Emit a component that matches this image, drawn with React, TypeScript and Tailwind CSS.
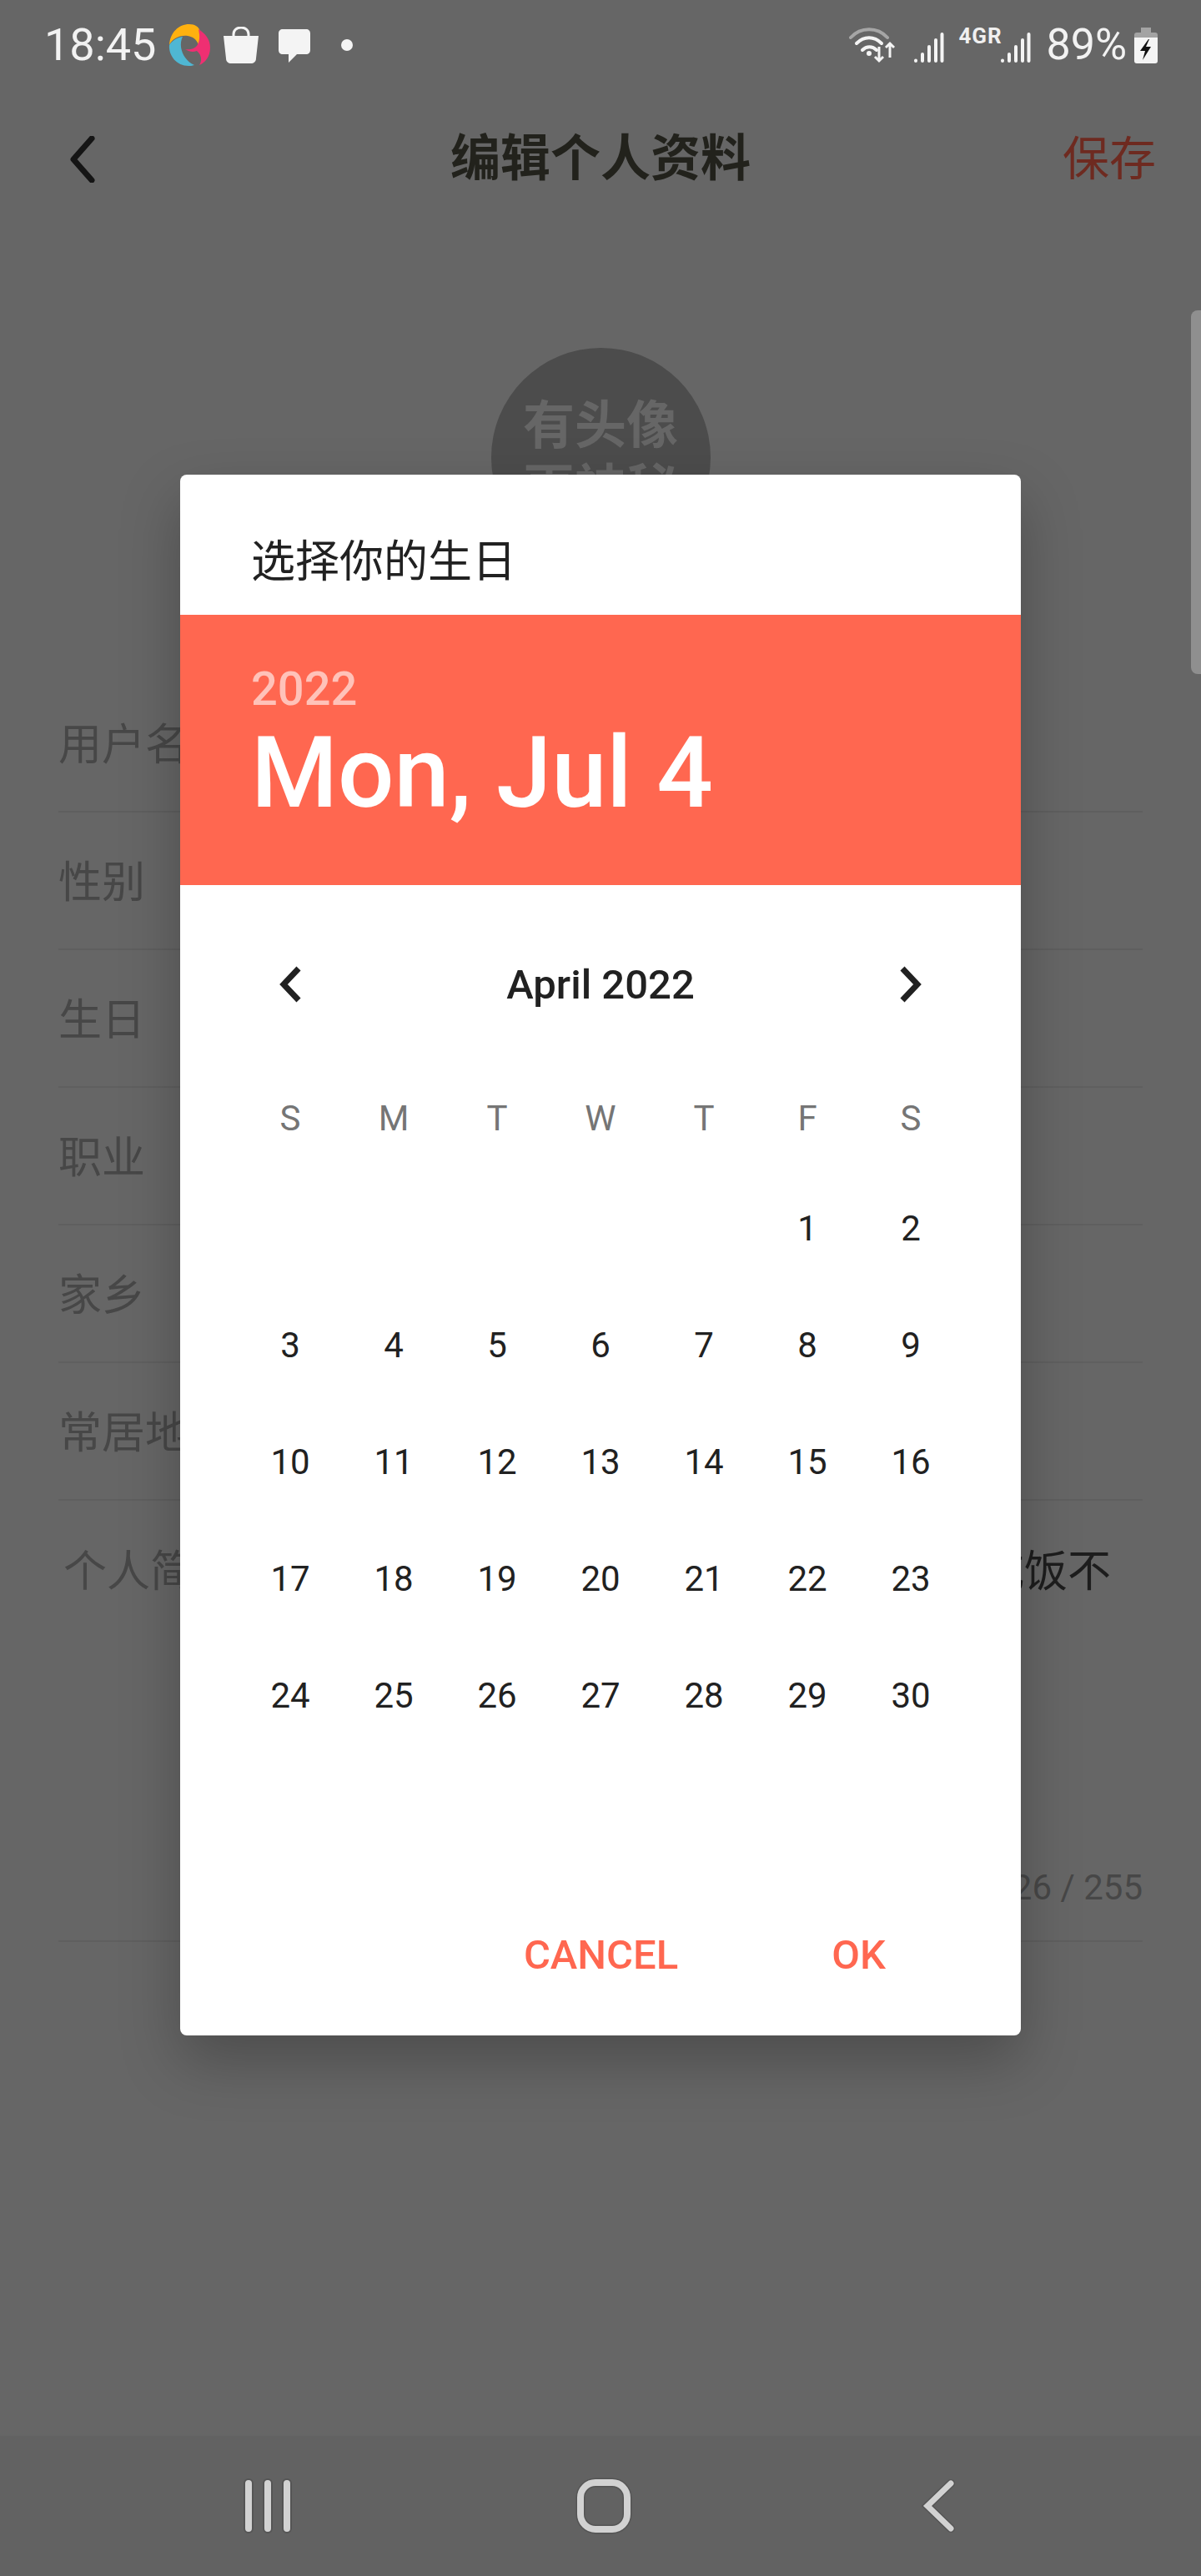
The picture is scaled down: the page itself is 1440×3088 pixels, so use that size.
import React from 'react';

const ROBOTO = 'font-["Roboto","Noto_Sans_CJK_SC",sans-serif]';

const weekdays = ['S', 'M', 'T', 'W', 'T', 'F', 'S'];
// April 2022 starts on a Friday
const days: (number | null)[] = [null, null, null, null, null, ...Array.from({ length: 30 }, (_, i) => i + 1)];
const rows = ['用户名', '性别', '生日', '职业', '家乡', '常居地'];

const Signal = () => (
  <svg width="37" height="36" viewBox="0 0 37 36" className="block">
    <g stroke="#f4f4f4" strokeWidth="4" strokeLinecap="round">
      <path d="M3 33.5v.5" />
      <path d="M11 26v8" />
      <path d="M19 17v17" />
      <path d="M27 9v25" />
      <path d="M34.500 2v32" />
    </g>
  </svg>
);

const StatusBar = () => (
  <div className="flex h-[108px] items-center justify-between pl-[53px] pr-[52px] text-[#f2f2f2]">
    <div className="flex items-center">
      <span className="text-[54px] leading-none">18:45</span>
      <svg width="50" height="50" viewBox="0 0 50 50" className="ml-[15px]">
        <path d="M1 25C2 10 12 0 25 0c7 0 11 3 13 8 2 5 0 14-2 17-2-7-7-10-13-11-10-1-18 3-22 11z" fill="#ffb10f" />
        <path d="M36 6c8 5 14 12 14 22 0 11-6 18-13 21 4-6 2-13-3-17-5 2-9 1-14-2 7 1 14-1 16-8 2-5 1-11 0-16z" fill="#ef2f72" />
        <path d="M1 25c3-5 9-9 16-10-4 8-2 18 3 25 3 4 6 7 11 9-3 1-5 1-7 1C10 50 0 38 1 25z" fill="#4fb7d3" />
      </svg>
      <svg width="42" height="44" viewBox="0 0 42 44" className="ml-[16px]">
        <path d="M0 11h42l-3 27c0 4-3 6-6 6H9c-3 0-6-2-6-6z" fill="#f4f4f4" />
        <path d="M12 12V9c0-5 4-8 9-8s9 3 9 8v3" fill="none" stroke="#f4f4f4" strokeWidth="3" />
      </svg>
      <svg width="40" height="41" viewBox="0 0 40 41" className="ml-[23px]">
        <path d="M6 1h28c3 0 5 2 5 5v20c0 3-2 5-5 5H23L13 41v-10H6c-3 0-5-2-5-5V6c0-3 2-5 5-5z" fill="#f4f4f4" />
      </svg>
      <span className="ml-[36px] h-[14px] w-[14px] rounded-full bg-[#f4f4f4]" />
    </div>
    <div className="flex items-center">
      <svg width="56" height="44" viewBox="0 0 56 44" className="block">
        <path d="M2 13C14 0 34 0 46 13" fill="none" stroke="#a6a6a6" strokeWidth="4" strokeLinecap="round" />
        <path d="M9 20c9-9 21-9 30 0" fill="none" stroke="#f4f4f4" strokeWidth="4" strokeLinecap="round" />
        <path d="M16 28c5-5 12-5 17 0" fill="none" stroke="#f4f4f4" strokeWidth="4" strokeLinecap="round" />
        <circle cx="24" cy="32" r="3" fill="#f4f4f4" />
        <path d="M36 24v17M31 36l5 5 5-5M49 37V20M44 25l5-5 5 5" fill="none" stroke="#f4f4f4" strokeWidth="3" />
      </svg>
      <div className="ml-[21px] mt-[6px]">
        <Signal />
      </div>
      <div className="ml-[17px] mb-[22px] w-[50px] text-[26px] leading-none font-bold tracking-[1px] text-[#f0f0f0]">4GR</div>
      <div className="mt-[6px]">
        <Signal />
      </div>
      <span className="ml-[18px] text-[52px] leading-none">89%</span>
      <svg width="28" height="43" viewBox="0 0 28 43" className="ml-[9px]">
        <path d="M8 0h12v6h-12z" fill="#a3a3a3" />
        <path d="M3 6h22c2 0 3 1 3 3v3H0V9c0-2 1-3 3-3z" fill="#a3a3a3" />
        <path d="M0 12h28v28c0 2-1 3-3 3H3c-2 0-3-1-3-3z" fill="#f4f4f4" />
        <path d="M17 14L7 28h6l-3 11 10-16h-6l4-9z" fill="#111" />
      </svg>
    </div>
  </div>
);

const TitleBar = () => (
  <div className="flex h-[166px] items-center px-[54px]">
    <div className="flex-1">
      <svg width="30" height="56" viewBox="0 0 30 56" className="ml-[30px] block">
        <path d="M26 3L4 28l22 25" fill="none" stroke="#151515" strokeWidth="7" strokeLinecap="round" strokeLinejoin="round" />
      </svg>
    </div>
    <span className="text-[60px] leading-none font-bold text-[#22221c]">编辑个人资料</span>
    <div className="flex-1 text-right text-[56px] leading-none text-[#6e2a20]">保存</div>
  </div>
);

const DatePicker = () => (
  <div className={`absolute left-[216px] top-[569px] flex h-[1871px] w-[1008px] flex-col overflow-hidden rounded-[8px] bg-white shadow-[0_30px_70px_rgba(0,0,0,0.25)] ${ROBOTO}`}>
    <div className="flex h-[168px] shrink-0 items-center pl-[85px] pt-[42px] text-[53px] leading-none text-[#212121]">选择你的生日</div>
    <div className="flex h-[324px] shrink-0 flex-col bg-[#ff6750] pl-[85px] pt-[59px] text-white">
      <span className="text-[56px] leading-[60px] font-medium text-white/60">2022</span>
      <span className="mt-[1px] text-[119px] leading-[140px] font-medium">Mon, Jul 4</span>
    </div>
    <div className="flex flex-1 flex-col px-[70px]">
      <div className="mt-[85px] flex h-[68px] items-center justify-between px-[48px]">
        <svg width="30" height="44" viewBox="0 0 30 44">
          <path d="M24 3L6 22l18 19" fill="none" stroke="#212121" strokeWidth="7" />
        </svg>
        <span className="text-[49px] leading-none font-medium text-[#212121]">April 2022</span>
        <svg width="30" height="44" viewBox="0 0 30 44">
          <path d="M6 3l18 19L6 41" fill="none" stroke="#212121" strokeWidth="7" />
        </svg>
      </div>
      <div className="mt-[106px] grid grid-cols-[repeat(7,124px)] text-center text-[42px] leading-none text-[#757575]">
        {weekdays.map((d, i) => (
          <span key={i} className="h-[40px]">{d}</span>
        ))}
      </div>
      <div className="mt-[42px] grid grid-cols-[repeat(7,124px)] auto-rows-[140px] text-center text-[42px] text-[#212121]">
        {days.map((d, i) => (
          <span key={i} className="flex items-center justify-center">{d}</span>
        ))}
      </div>
      <div className="mt-auto mb-[60px] flex items-center justify-end pr-[92px] text-[49px] leading-[72px] font-medium text-[#ff6750]">
        <span>CANCEL</span>
        <span className="ml-[184px]">OK</span>
      </div>
    </div>
  </div>
);

export default function App() {
  return (
    <div className={`relative h-[3088px] w-[1440px] overflow-hidden bg-[#666666] ${ROBOTO}`}>
      <StatusBar />
      <TitleBar />

      <div className="mt-[143px] flex justify-center">
        <div className="flex h-[263px] w-[263px] items-center justify-center rounded-full bg-[#4c4c4c] text-center text-[62px] leading-[76px] font-bold text-[#666666]">
          有头像<br />更神秘
        </div>
      </div>

      <div className="mx-[70px] mt-[129px]">
        {rows.map((label) => (
          <div key={label} className="flex h-[165px] items-center border-b-2 border-[#5f5f5f] pt-[6px] text-[52px] text-[#474747]">
            {label}
          </div>
        ))}
        <div className="flex h-[529px] flex-col border-b-2 border-[#5f5f5f] pt-[56px] text-[52px] leading-[60px]">
          <div className="flex justify-between pl-[6px] pr-[38px]">
            <span className="text-[#474747]">个人简介</span>
            <span className="text-[#1d1d1d]">吃饭不</span>
          </div>
          <span className="mt-[323px] text-right text-[42px] leading-[50px] text-[#474747]">126 / 255</span>
        </div>
      </div>

      {/* scrollbar */}
      <div className="absolute right-0 top-[372px] h-[436px] w-[12px] rounded-l-[8px] bg-[#8f8f8f]" />

      {/* nav bar */}
      <div className="absolute inset-x-0 bottom-0 flex h-[168px] items-center bg-[#626262]">
        <svg width="1440" height="70" viewBox="0 0 1440 70" className="block">
          <g fill="none" stroke="#555" strokeWidth="12" strokeLinecap="round">
            <path d="M298 8v54M321 8v54M344 8v54" />
          </g>
          <g fill="none" stroke="#d2d2d2" strokeWidth="8" strokeLinecap="round">
            <path d="M298 8v54M321 8v54M344 8v54" />
          </g>
          <rect x="696" y="7" width="56" height="56" rx="18" fill="none" stroke="#555" strokeWidth="11" />
          <rect x="696" y="7" width="56" height="56" rx="18" fill="none" stroke="#d2d2d2" strokeWidth="8" />
          <path d="M1140 8l-28 27 28 27" fill="none" stroke="#555" strokeWidth="10" strokeLinecap="round" />
          <path d="M1140 8l-28 27 28 27" fill="none" stroke="#d2d2d2" strokeWidth="7" strokeLinecap="round" />
        </svg>
      </div>

      <DatePicker />
    </div>
  );
}
